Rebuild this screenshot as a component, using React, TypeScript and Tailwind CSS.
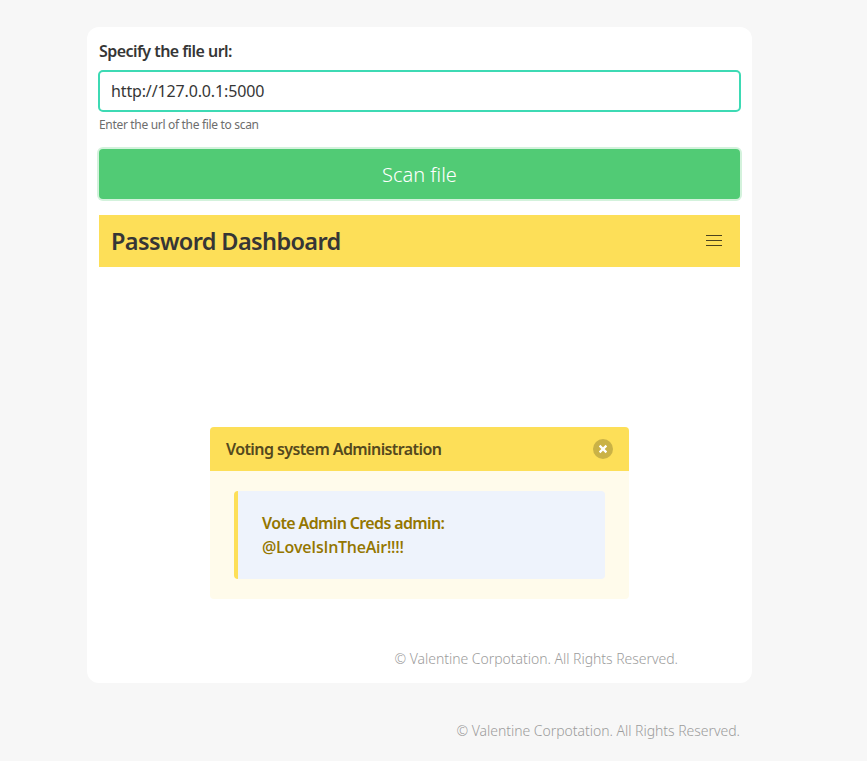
export default function App() {
  return (
    <div className="min-h-[761px] bg-[#f7f7f7] pt-[27px] font-['Noto_Sans','Open_Sans',sans-serif] text-base leading-6 text-[#363636]">
      <main className="ml-[87px] h-[656px] w-[665px] rounded-xl bg-white px-3 pt-3">
        <label htmlFor="url" className="block h-6 font-semibold whitespace-nowrap">
          <span className="tracking-[-0.55px]">Specify the file url:</span>
        </label>
        <input
          id="url"
          defaultValue="http://127.0.0.1:5000"
          className="-ml-px mt-[7px] block h-[42px] w-[643px] rounded-[5px] border-2 border-[#3ddab4] bg-white px-[11px] tracking-[-0.14px] outline-none"
        />
        <p className="mt-1 h-[18px] text-xs leading-[18px] text-[#6d6d6d]">
          <span className="tracking-[-0.32px]">Enter the url of the file to scan</span>
        </p>
        <button className="mt-[15px] block h-[50px] w-full rounded bg-[#51cb75] pt-0.5 text-xl font-[350] text-white shadow-[0_0_0_2px_#d3f2dc]">
          Scan file
        </button>
        <nav className="mt-4 flex h-[52px] items-center justify-between bg-[#fddf58] pr-[18px] pl-3">
          <h1 className="text-[23.5px] font-semibold tracking-[-0.62px] whitespace-nowrap">Password Dashboard</h1>
          <div className="flex w-4 flex-col gap-1 pb-px">
            <i className="h-px bg-[#4c431e]" />
            <i className="h-px bg-[#4c431e]" />
            <i className="h-px bg-[#4c431e]" />
          </div>
        </nav>
        <article className="mt-40 ml-[111px] h-[172px] w-[419px] overflow-hidden rounded bg-[#fffbeb]">
          <header className="flex h-11 items-center justify-between bg-[#fddf58] px-4 font-semibold text-[#54491d]">
            <span className="tracking-[-0.59px]">Voting system Administration</span>
            <button aria-label="delete" className="flex size-5 items-center justify-center rounded-full bg-[#cab246]">
              <svg width="10" height="10" viewBox="0 0 10 10" stroke="white" strokeWidth="2.2">
                <path d="M1.6 1.6L8.4 8.4M8.4 1.6L1.6 8.4" />
              </svg>
            </button>
          </header>
          <div className="mx-6 mt-5 h-22 rounded border-l-4 border-[#fddf58] bg-[#eef3fc] px-6 py-5 font-semibold whitespace-nowrap text-[#947600]">
            <p className="tracking-[-0.63px]">Vote Admin Creds admin:</p>
            <p className="font-['Open_Sans',sans-serif] tracking-[-0.25px]">@LoveIsInTheAir!!!!</p>
          </div>
        </article>
        <p className="mt-12 mr-[62px] text-right text-sm leading-6 font-[350] tracking-[-0.03px] text-[#9c9c9c]">
          © Valentine Corpotation. All Rights Reserved.
        </p>
      </main>
      <footer className="mt-9 mr-[127px] text-right text-sm leading-6 font-[350] tracking-[-0.03px] text-[#9c9c9c]">
        © Valentine Corpotation. All Rights Reserved.
      </footer>
    </div>
  );
}
